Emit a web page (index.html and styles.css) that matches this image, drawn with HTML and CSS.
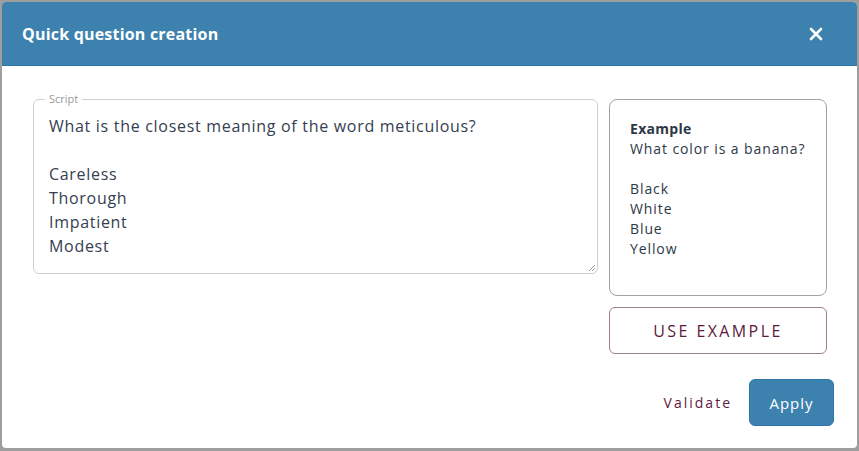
FILE: index.html
```html
<!DOCTYPE html>
<html lang="en">
<head>
<meta charset="utf-8">
<title>Quick question creation</title>
<link rel="stylesheet" href="styles.css">
</head>
<body>
<div class="modal">
  <header class="modal-header">
    <h1 class="modal-title">Quick question creation</h1>
    <button class="close-btn" aria-label="Close">
      <svg width="14" height="14" viewBox="0 0 14 14"><path d="M2 2 L12 12 M12 2 L2 12" stroke="#fff" stroke-width="2.6" stroke-linecap="round"/></svg>
    </button>
  </header>
  <div class="modal-body">
    <div class="main-row">
      <fieldset class="script-field">
        <legend class="script-legend">Script</legend>
        <div class="script-text">What is the closest meaning of the word meticulous?<br><br>Careless<br>Thorough<br>Impatient<br>Modest</div>
        <svg class="resize" width="8" height="8" viewBox="0 0 8 8"><path d="M7 1 L1 7 M7 4 L4 7" stroke="#999" stroke-width="1"/></svg>
      </fieldset>
      <div class="side-col">
        <div class="example-box">
          <div class="example-title">Example</div>
          <div class="example-text">What color is a banana?<br><br>Black<br>White<br>Blue<br>Yellow</div>
        </div>
        <button class="use-example">USE EXAMPLE</button>
      </div>
    </div>
    <div class="footer-row">
      <button class="validate">Validate</button>
      <button class="apply">Apply</button>
    </div>
  </div>
</div>
</body>
</html>
```

FILE: styles.css
```css
* { box-sizing: border-box; }
html, body { margin: 0; padding: 0; }
body {
  background: #9e9e9e;
  width: 859px;
  height: 451px;
  overflow: hidden;
  font-family: "Open Sans", "Noto Sans", sans-serif;
  padding: 2px 2px 3px 2px;
}
.modal {
  background: #fff;
  height: 446px;
  border-radius: 4px;
  overflow: hidden;
  display: flex;
  flex-direction: column;
}
.modal-header {
  background: #3d82ae;
  height: 64px;
  border-bottom: 1px solid #2f76a8;
  display: flex;
  align-items: center;
  justify-content: space-between;
  padding: 0 34px 0 20px;
  flex-shrink: 0;
}
.modal-title {
  margin: 0;
  color: #fff;
  font-size: 16px;
  font-weight: 700;
  letter-spacing: 0.2px;
}
.close-btn {
  background: none;
  border: none;
  padding: 0;
  width: 14px;
  height: 14px;
  display: flex;
  cursor: pointer;
}
.modal-body {
  padding: 33px 23px 0 31px;
  display: flex;
  flex-direction: column;
}
.main-row {
  display: flex;
  align-items: flex-start;
  gap: 11px;
  padding-right: 7px;
}
.script-field {
  position: relative;
  flex: 1;
  margin: 0;
  height: 181px;
  border: 1px solid #cfcfcf;
  border-radius: 6px;
  padding: 9px 15px 0 15px;
  margin-top: -6px;
}
.script-legend {
  font-size: 11px;
  color: #9a9a9a;
  padding: 0 4px;
  margin-left: -4px;
  line-height: 12px;
}
.script-text {
  font-size: 16px;
  line-height: 24px;
  color: #34404f;
  letter-spacing: 0.7px;
}
.resize {
  position: absolute;
  right: 1px;
  bottom: 1px;
}
.side-col {
  width: 218px;
  display: flex;
  flex-direction: column;
  gap: 11px;
}
.example-box {
  height: 197px;
  border: 1px solid #a0a0a6;
  border-radius: 8px;
  padding: 19px 20px 0 20px;
  color: #2d3846;
  font-size: 14px;
  line-height: 20px;
  letter-spacing: 0.9px;
}
.example-title { font-weight: 700; letter-spacing: 0.3px; }
.use-example {
  height: 47px;
  background: #fff;
  border: 1px solid #9e7f8e;
  border-radius: 6px;
  color: #5e1a3d;
  font-family: inherit;
  font-size: 16px;
  letter-spacing: 2.4px;
  cursor: pointer;
}
.footer-row {
  display: flex;
  justify-content: flex-end;
  align-items: center;
  gap: 17px;
  margin-top: 25px;
}
.validate {
  background: none;
  border: none;
  padding: 0;
  color: #5e1a3d;
  font-family: inherit;
  font-size: 14px;
  letter-spacing: 2px;
  cursor: pointer;
}
.apply {
  width: 85px;
  height: 47px;
  background: #3d82ae;
  border: 1px solid #2f76a8;
  border-radius: 6px;
  color: #fff;
  font-family: inherit;
  font-size: 15px;
  letter-spacing: 1px;
  cursor: pointer;
}
```
